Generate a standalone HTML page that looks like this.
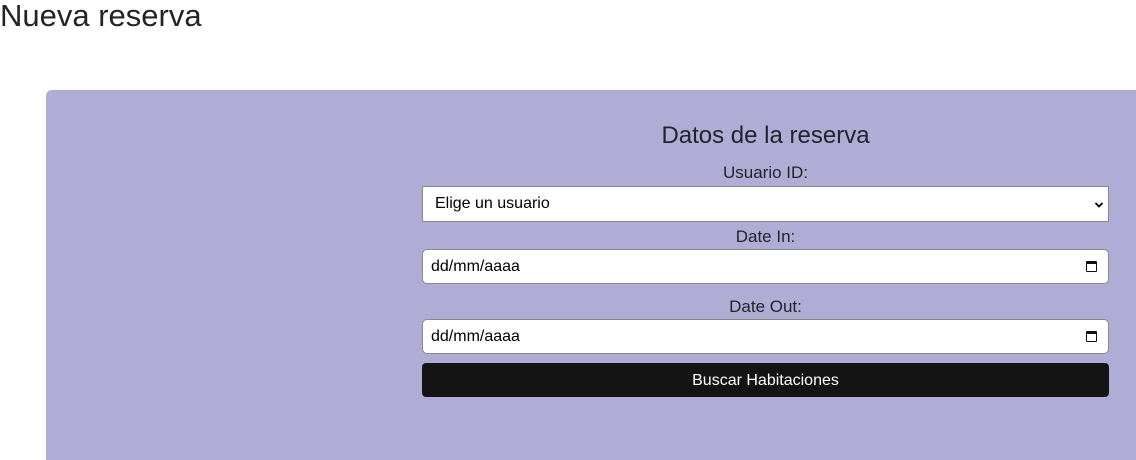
<!DOCTYPE html>
<html><head><meta charset="utf-8"><style>
body{margin:0;width:1136px;height:448px;overflow:hidden;background:#fff;font-family:"Liberation Sans",Arial,sans-serif;color:#212529;position:relative}
.t{position:absolute;left:0;top:-1px;font-size:31px;line-height:34px;margin:0;font-weight:400}
.p{position:absolute;left:46px;top:90px;width:1100px;height:370px;background:#afadd6;border-radius:6px 0 0 0}
.a{position:absolute;left:422px;width:687px;box-sizing:border-box}
.l{text-align:center;font-size:17px;line-height:18px}
.f{background:#fff;border:1px solid #8a8a8a;font-size:16px;color:#000;display:flex;align-items:center}
.cal{position:absolute;right:11px;top:11px;width:11px;height:11px;border:1.5px solid #111;border-top-width:3px;border-radius:1px;box-sizing:border-box}
</style></head><body>
<h1 class="t">Nueva reserva</h1>
<div class="p"></div>
<div class="a l" style="top:122px;font-size:24px;line-height:28px">Datos de la reserva</div>
<div class="a l" style="top:164px">Usuario ID:</div>
<div class="a f" style="top:186px;height:36px;padding-left:12px">Elige un usuario
<svg style="position:absolute;right:4px;top:13px" width="10" height="10" viewBox="0 0 10 10"><path d="M1.5 3L5 6.5 8.5 3" fill="none" stroke="#000" stroke-width="1.8"/></svg></div>
<div class="a l" style="top:228px">Date In:</div>
<div class="a f" style="top:249px;height:35px;padding-left:8px;border-radius:5px">dd/mm/aaaa<div class="cal"></div></div>
<div class="a l" style="top:298px">Date Out:</div>
<div class="a f" style="top:319px;height:35px;padding-left:8px;border-radius:5px">dd/mm/aaaa<div class="cal"></div></div>
<div class="a" style="top:363px;height:34px;background:#141414;color:#fff;border-radius:4px;font-size:16px;text-align:center;line-height:35px">Buscar Habitaciones</div>
</body></html>
